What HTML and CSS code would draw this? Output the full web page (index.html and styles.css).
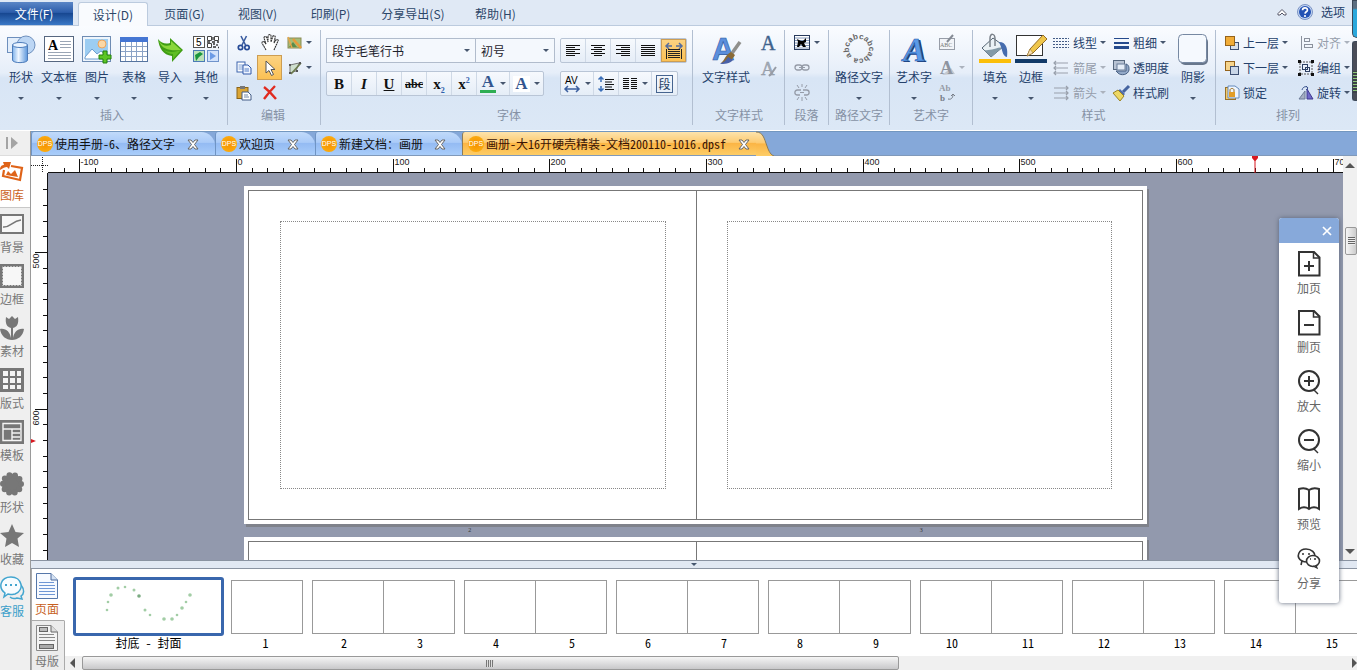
FILE: index.html
```html
<!DOCTYPE html>
<html lang="zh-CN">
<head>
<meta charset="utf-8">
<title>画册编辑器</title>
<link rel="stylesheet" href="styles.css">
</head>
<body>
<div class="app">
  <nav class="menubar">
    <button class="menu file">文件(F)</button>
    <button class="menu current">设计(D)</button>
    <button class="menu">页面(G)</button>
    <button class="menu">视图(V)</button>
    <button class="menu">印刷(P)</button>
    <button class="menu wide">分享导出(S)</button>
    <button class="menu">帮助(H)</button>
    <div class="menu-right">
      <button class="plain" aria-label="收起"><svg width="12" height="10" viewBox="0 0 12 10"><path d="M2 6.500L6 2.500L10 6.500V8H8L6 6L4 8H2Z" fill="#fff" stroke="#556" stroke-width="1"/></svg></button>
      <button class="plain" aria-label="问号"><svg width="16" height="16" viewBox="0 0 16 16"><circle cx="8" cy="8" r="7.500" fill="#c3d5f2" stroke="#7b94c4"/><circle cx="8" cy="8" r="6" fill="#2352b4"/><path d="M5.500 6.200C5.600 3 10.600 3.200 10.400 6.200C10.300 7.800 8.200 7.800 8 9.600" fill="none" stroke="#fff" stroke-width="1.700"/><circle cx="8" cy="12" r="1.100" fill="#fff"/></svg></button>
      <button class="plain">选项</button>
    </div>
  </nav>

  <header class="ribbon">
    <section class="group g-insert">
      <div class="tools">
        <button class="big"><svg width="30" height="30" viewBox="0 0 30 30"><defs><linearGradient id="cy"><stop offset="0" stop-color="#7fb2ea"/><stop offset=".4" stop-color="#eef6ff"/><stop offset="1" stop-color="#5c97dc"/></linearGradient></defs><rect x="1.500" y="3.500" width="16" height="15" fill="#e3eefb" stroke="#6d8fbd"/><circle cx="20" cy="11" r="9" fill="#bcd6f4" stroke="#6d8fbd"/><path d="M6.500 11V26C6.500 29.500 21.500 29.500 21.500 26V11Z" fill="url(#cy)" stroke="#4d7cba"/><ellipse cx="14" cy="11" rx="7.500" ry="2.500" fill="#e9f3ff" stroke="#4d7cba"/></svg><span>形状</span><i class="arrow"></i></button>
        <button class="big"><svg width="30" height="30" viewBox="0 0 30 30"><rect x=".500" y="2.500" width="29" height="25" fill="#fff" stroke="#566780"/><text x="4" y="16" class="serif" font-size="14" font-weight="bold">A</text><path d="M16 7.500H27M16 10.500H27M16 13.500H27M4 18.500H27M4 21.500H27M4 24.500H27" stroke="#9aa5b5"/></svg><span>文本框</span><i class="arrow"></i></button>
        <button class="big"><svg width="30" height="30" viewBox="0 0 30 30"><rect x=".500" y="2.500" width="28" height="25" fill="#eef5fc" stroke="#6e8cb3"/><rect x="3" y="5" width="23" height="20" fill="#9ccdf2"/><circle cx="20" cy="10" r="4" fill="#fbd7a5" stroke="#eda45c"/><path d="M3 23L10 15L15 20L19 17L26 23V25H3Z" fill="#fff" stroke="#6d9ed0"/><path d="M21 17H25V21H29V25H25V29H21V25H17V21H21Z" fill="#5cc526" stroke="#23800d"/></svg><span>图片</span><i class="arrow"></i></button>
        <button class="big"><svg width="30" height="30" viewBox="0 0 30 30"><rect x="1.500" y="3.500" width="27" height="24" fill="#fff" stroke="#56749f"/><rect x="1" y="3" width="28" height="5" fill="#4576d3"/><path d="M2 12.500H28M2 17.500H28M2 22.500H28M6.500 8V27M12.500 8V27M17.500 8V27M23.500 8V27" stroke="#8ba3c6"/></svg><span>表格</span><i class="arrow"></i></button>
        <button class="big"><svg width="30" height="30" viewBox="0 0 30 30"><path d="M3 5C7 10 11 10 15 9V4L28 16L17 28V22C8 21 4 14 3 5Z" fill="#3f9d14"/><path d="M4 7C8 13 12 12 16 11V7L26 16C16 17 7 16 4 7Z" fill="#8ad73b"/><path d="M9 16C14 19 21 18 26 16L18 25V20C14 20 11 18 9 16Z" fill="#5fbe22"/></svg><span>导入</span><i class="arrow"></i></button>
        <button class="big"><svg width="30" height="30" viewBox="0 0 30 30"><rect x="2.500" y="2.500" width="11" height="11" fill="#fff" stroke="#555"/><text x="5" y="12" class="sans" font-size="10">5</text><path d="M16.500 2.500H20.500V6.500H16.500ZM23.500 2.500H27.500V6.500H23.500ZM16.500 9.500H20.500V13.500H16.500Z" fill="#fff" stroke="#444"/><path d="M22 3V6M16 8H19M21 8H24M26 8H28M22 10H24M26 10V12M22 13H25M27 13.500H28" stroke="#333" stroke-width="1.300"/><rect x="2.500" y="16.500" width="11" height="11" fill="#bde1b8" stroke="#4b7bb5"/><path d="M4 21L9 18L12 20L8 23L5 27Z" fill="#1a963d"/><rect x="16.500" y="16.500" width="11" height="11" fill="#d2e2fb" stroke="#7093cb"/><path d="M19 18L25 22L19 26Z" fill="#6c9be6"/></svg><span>其他</span><i class="arrow"></i></button>
      </div>
      <h2>插入</h2>
    </section>

    <section class="group g-edit">
      <div class="tools grid3">
        <button class="small" aria-label="剪切"><svg width="16" height="16" viewBox="0 0 16 16"><path d="M5 1L9.500 10M10.500 1L6 10" stroke="#3b5da0" stroke-width="1.600"/><circle cx="4.500" cy="12.500" r="2.200" fill="none" stroke="#274b96" stroke-width="1.700"/><circle cx="11" cy="12.500" r="2.200" fill="none" stroke="#274b96" stroke-width="1.700"/></svg></button>
        <button class="small" aria-label="抓手"><svg width="18" height="18" viewBox="0 0 18 18"><path d="M5 16L1 9C1 7 3 7 4 9L5 10L3 4C3 2 5 2 6 4L7 8L7 2C8 0 10 0 10 2V8L12 2C13 1 15 2 14 4L13 9L15 6C16 5 18 6 17 7L13 16" fill="#fff" stroke="#333" stroke-width="1.100" stroke-dasharray="2 .5"/></svg></button>
        <button class="small pair" aria-label="编辑图片"><svg width="16" height="16" viewBox="0 0 16 16"><rect x="1" y="3" width="13" height="10" fill="#a6bd77" stroke="#8b8b55"/><path d="M2 12L6 7L10 12" fill="#5b8c4b"/><path d="M6 4L14 13" stroke="#e89a3a" stroke-width="2.500"/><path d="M1 2L5 13" stroke="#e6a64c" stroke-width="1.500"/></svg><i class="arrow"></i></button>
        <button class="small" aria-label="复制"><svg width="16" height="16" viewBox="0 0 16 16"><rect x="1" y="2" width="8" height="10" fill="#fff" stroke="#3d64ad"/><path d="M2.500 5H7M2.500 7H7M2.500 9H7" stroke="#7fa0d6"/><path d="M7 5H12L15 8V14H7Z" fill="#eef4ff" stroke="#3158a8"/><path d="M8.500 9H13M8.500 11H13" stroke="#557fc6"/></svg></button>
        <button class="small on" aria-label="选择"><svg width="14" height="18" viewBox="0 0 14 18"><path d="M3 2V14L6 11.500L8.500 16.500L10.500 15.500L8 10.500H12Z" fill="#fff" stroke="#555"/></svg></button>
        <button class="small pair" aria-label="节点"><svg width="16" height="16" viewBox="0 0 16 16"><path d="M3 5L12 3L9 11L3 13Z" fill="#cfe0cf" stroke="#777"/><path d="M4 14L14 3" stroke="#6b7a4c" stroke-width="1.600"/><path d="M2 4H4V6H2ZM12 2H14V4H12ZM2 12H4V14H2ZM9 10H11V12H9Z" fill="#555"/></svg><i class="arrow"></i></button>
        <button class="small" aria-label="粘贴"><svg width="16" height="16" viewBox="0 0 16 16"><rect x="1" y="2.500" width="11" height="11" fill="#dba534" stroke="#8b6418"/><rect x="4" y="1" width="5" height="3" fill="#777"/><path d="M6 7H12L15 10V15H6Z" fill="#fff" stroke="#445d86"/><path d="M8 10H12M8 12H13" stroke="#7789a5"/></svg></button>
        <button class="small" aria-label="删除"><svg width="16" height="16" viewBox="0 0 16 16"><path d="M2 2C6 5 10 9 14 14M13 1C9 5 5 10 2 14" stroke="#e02b20" stroke-width="2.400" fill="none"/></svg></button>
      </div>
      <h2>编辑</h2>
    </section>

    <section class="group g-font">
      <div class="tools stack">
        <div class="line">
          <div class="combo name"><select aria-label="字体名称"><option>段宁毛笔行书</option></select></div>
          <div class="combo size"><select aria-label="字号"><option>初号</option></select></div>
          <div class="bar gap">
            <button aria-label="左对齐"><svg width="16" height="14" viewBox="0 0 16 14"><path d="M1 1.500H15M1 3.500H10M1 5.500H15M1 7.500H10M1 9.500H15M1 11.500H10" stroke="#111"/></svg></button>
            <button aria-label="居中"><svg width="16" height="14" viewBox="0 0 16 14"><path d="M1 1.500H15M4 3.500H12M1 5.500H15M4 7.500H12M1 9.500H15M4 11.500H12" stroke="#111"/></svg></button>
            <button aria-label="右对齐"><svg width="16" height="14" viewBox="0 0 16 14"><path d="M1 1.500H15M6 3.500H15M1 5.500H15M6 7.500H15M1 9.500H15M6 11.500H15" stroke="#111"/></svg></button>
            <button aria-label="两端对齐"><svg width="16" height="14" viewBox="0 0 16 14"><path d="M1 1.500H15M1 3.500H15M1 5.500H15M1 7.500H15M1 9.500H15M1 11.500H15" stroke="#111"/></svg></button>
            <button class="on" aria-label="分散对齐"><svg width="18" height="18" viewBox="0 0 18 18"><path d="M1 4H7M11 4H17M4 1L1 4L4 7M14 1L17 4L14 7" stroke="#566d9e" stroke-width="1.500" fill="none"/><path d="M1.500 7V17M16.500 7V17M3 7.500H15M3 9.500H15M3 11.500H15M3 13.500H15M3 15.500H15" stroke="#222"/></svg></button>
          </div>
        </div>
        <div class="line">
          <div class="bar">
            <button class="glyph"><b>B</b></button>
            <button class="glyph"><b><em>I</em></b></button>
            <button class="glyph"><b><u>U</u></b></button>
            <button class="glyph strike"><b><s>abc</s></b></button>
            <button class="glyph"><b>x<sub>2</sub></b></button>
            <button class="glyph"><b>x<sup>2</sup></b></button>
            <button class="glyph drop"><b class="ink">A</b><i class="arrow"></i></button>
            <button class="glyph drop"><b class="paper">A</b><i class="arrow"></i></button>
          </div>
          <div class="bar gap2">
            <button class="drop" aria-label="字距"><svg width="18" height="18" viewBox="0 0 18 18"><text x="2" y="9" class="sans" font-size="10">AV</text><path d="M2 14H16M5 11L2 14L5 17M13 11L16 14L13 17" stroke="#3b5f9f" stroke-width="1.500" fill="none"/></svg><i class="arrow"></i></button>
            <button aria-label="行距"><svg width="18" height="18" viewBox="0 0 18 18"><path d="M4 2V7M4 11V16M1.500 4.500L4 2L6.500 4.500M1.500 13.500L4 16L6.500 13.500" stroke="#3b6fb8" stroke-width="1.500" fill="none"/><path d="M8 4.500H17M8 9.500H17M8 14.500H17M8 7H15M8 12H15" stroke="#111"/></svg></button>
            <button class="drop" aria-label="分栏"><svg width="16" height="14" viewBox="0 0 16 14"><path d="M1 1.500H7M1 3.500H7M1 5.500H7M1 7.500H7M1 9.500H7M1 11.500H7M9 1.500H15M9 3.500H15M9 5.500H15M9 7.500H15M9 9.500H15M9 11.500H15" stroke="#111"/></svg><i class="arrow"></i></button>
            <button><span class="boxed">段</span></button>
          </div>
        </div>
      </div>
      <h2>字体</h2>
    </section>

    <section class="group g-textstyle">
      <div class="tools">
        <button class="big"><svg width="32" height="32" viewBox="0 0 32 32"><text x="2" y="27" class="sans" font-size="31" font-weight="bold" fill="#5b8fdc" stroke="#2c57a0" stroke-width=".6">A</text><path d="M30 9L20 23" stroke="#8f8f8c" stroke-width="3.500"/><path d="M21 19L25 22C22 28 17 30 11 30C15 27 15 22 21 19Z" fill="#8a6a35"/><path d="M10 31C14 31 20 31 23 27L18 24C15 29 13 29 10 31Z" fill="#4961a8"/></svg><span>文字样式</span></button>
        <div class="col">
          <button class="small" aria-label="字符"><svg width="18" height="18" viewBox="0 0 18 18"><text x="2" y="16" class="serif" font-size="20" fill="#3e628c" stroke="#3e628c" stroke-width=".4">A</text></svg></button>
          <button class="small" aria-label="字符刷"><svg width="18" height="18" viewBox="0 0 18 18"><text x="2" y="16" class="serif" font-size="19" fill="#a3abb6" stroke="#8e96a2" stroke-width=".4">A</text><path d="M17 8L12 15L10 17" stroke="#979ca6" stroke-width="2" fill="none"/></svg></button>
        </div>
      </div>
      <h2>文字样式</h2>
    </section>

    <section class="group g-para">
      <div class="tools col">
        <button class="small pair" aria-label="绕排"><svg width="18" height="18" viewBox="0 0 18 18"><rect x="1.500" y="1.500" width="15" height="14" fill="#fff" stroke="#273a5c"/><path d="M2 4H16M2 6.500H16M2 9H16M2 11.500H16M2 14H16" stroke="#8398ba"/><path d="M4 5L8 7L10 7L13 4L13 8L11 9L13 13H10L8 10L6 13H4L5 8Z" fill="#000"/></svg><i class="arrow"></i></button>
        <button class="small" aria-label="链接"><svg width="18" height="18" viewBox="0 0 18 18"><rect x="2" y="6" width="7" height="5" rx="2.500" fill="none" stroke="#969ca8" stroke-width="1.300"/><rect x="9" y="6" width="7" height="5" rx="2.500" fill="none" stroke="#969ca8" stroke-width="1.300"/><path d="M6 8.500H12" stroke="#969ca8"/></svg></button>
        <button class="small" aria-label="断开链接"><svg width="18" height="18" viewBox="0 0 18 18"><path d="M8 6H4.500C1 6 1 11 4.500 11H7M10 6H13.500C17 6 17 11 13.500 11H11" fill="none" stroke="#969ca8" stroke-width="1.300"/><path d="M9 0V3M4 1L6 4M14 1L12 4M9 13V17M4 16L6 13M14 16L12 13M7 8.500H11" stroke="#969ca8"/></svg></button>
      </div>
      <h2>段落</h2>
    </section>

    <section class="group g-path">
      <div class="tools">
        <button class="big"><svg width="32" height="32" viewBox="0 0 32 32"><path id="ring" d="M9 23A10 10 0 1 1 23 23A10 10 0 0 1 9 23" fill="none"/><text class="sans" font-size="8" font-weight="bold" fill="#666"><textPath href="#ring">abcabcabcabca</textPath></text></svg><span>路径文字</span><i class="arrow"></i></button>
      </div>
      <h2>路径文字</h2>
    </section>

    <section class="group g-art">
      <div class="tools">
        <button class="big"><svg width="30" height="30" viewBox="0 0 30 30"><text x="6" y="28" class="serif" font-size="34" font-style="italic" font-weight="bold" fill="#1e3f78" aria-hidden="true">A</text><text x="4" y="27" class="serif" font-size="34" font-style="italic" font-weight="bold" fill="#5b9ae6" stroke="#2860ae" stroke-width=".6">A</text></svg><span>艺术字</span><i class="arrow"></i></button>
        <div class="col">
          <button class="small" aria-label="编辑艺术字"><svg width="18" height="18" viewBox="0 0 18 18"><rect x="1.500" y="4.500" width="15" height="11" fill="#f2f4f8" stroke="#979da8"/><text x="2" y="13" class="serif" font-size="6" fill="#777">ABC</text><path d="M15 1L9 8" stroke="#858b95" stroke-width="2"/></svg></button>
          <button class="small pair dim" aria-label="艺术字形状"><svg width="18" height="18" viewBox="0 0 18 18"><path d="M4 16L13 9L17 15Z" fill="#c4c8cf"/><text x="2" y="15" class="serif" font-size="18" font-weight="bold" fill="#8e949f">A</text></svg><i class="arrow"></i></button>
          <button class="small" aria-label="竖排"><svg width="18" height="18" viewBox="0 0 18 18"><text x="1" y="7" class="serif" font-size="9" font-weight="bold" fill="#969ca6">Ab</text><text x="2" y="17" class="serif" font-size="9" font-weight="bold" fill="#777d88">b</text><path d="M10 15C14 16 15 13 15 10M13 12L15 10L17 12" fill="none" stroke="#777d88"/></svg></button>
        </div>
      </div>
      <h2>艺术字</h2>
    </section>

    <section class="group g-style">
      <div class="tools">
        <button class="big"><svg width="32" height="32" viewBox="0 0 32 32"><path d="M3 15L14 5L25 13L12 24Z" fill="#eaf1f5" stroke="#566675"/><path d="M5 17C11 18 16 15 24 14L12 24Z" fill="#8299a7"/><path d="M11 14V5C11 0 16 0 16 6V13" fill="none" stroke="#7b828a" stroke-width="1.500"/><path d="M20 9C28 9 29 17 28 24C23 23 24 17 20 9Z" fill="#456cae"/><rect y="26" width="32" height="4" fill="#fbbf0a"/></svg><span>填充</span><i class="arrow"></i></button>
        <button class="big"><svg width="32" height="32" viewBox="0 0 32 32"><rect x="1.500" y="2.500" width="26" height="20" fill="#fff" stroke="#333"/><path d="M28 2L32 6L18 20L12 23L15 16Z" fill="#efc64b" stroke="#936c28"/><path d="M12 23L15 16L18 20Z" fill="#f7dfb2" stroke="#936c28" stroke-width=".5"/><rect y="26" width="32" height="4" fill="#123a68"/></svg><span>边框</span><i class="arrow"></i></button>
        <div class="col">
          <button class="row"><svg width="18" height="18" viewBox="0 0 18 18"><path d="M1 4.500H17M1 7.500H17M1 10.500H17M1 13.500H17" stroke="#445c86" stroke-dasharray="2 1"/></svg>线型<i class="arrow"></i></button>
          <button class="row dim"><svg width="18" height="18" viewBox="0 0 18 18"><path d="M2 4H16M2 9H16M2 14H16M4 2L2 4L4 6M4 7L2 9L4 11M4 12L2 14L4 16" stroke="#99a0ac" stroke-width="1.200" fill="none"/></svg>箭尾<i class="arrow"></i></button>
          <button class="row dim"><svg width="18" height="18" viewBox="0 0 18 18"><path d="M2 4H16M2 9H16M2 14H16M14 2L16 4L14 6M14 7L16 9L14 11M14 12L16 14L14 16" stroke="#99a0ac" stroke-width="1.200" fill="none"/></svg>箭头<i class="arrow"></i></button>
        </div>
        <div class="col">
          <button class="row"><svg width="18" height="18" viewBox="0 0 18 18"><path d="M2 4.500H17" stroke="#254a8d"/><path d="M2 9H17" stroke="#254a8d" stroke-width="2"/><path d="M2 13.500H17" stroke="#254a8d" stroke-width="3"/></svg>粗细<i class="arrow"></i></button>
          <button class="row"><svg width="18" height="18" viewBox="0 0 18 18"><rect x="1.500" y="1.500" width="11" height="9" fill="#b8c3d3" stroke="#56677d"/><path d="M4 12H14V5C17 6 17 8 17 11C16 16 9 17 6 14Z" fill="#93a9c8" stroke="#486083"/><rect x="5" y="5" width="8" height="6" fill="#e5edf7" stroke="#6b7e9a"/></svg>透明度</button>
          <button class="row"><svg width="18" height="18" viewBox="0 0 18 18"><path d="M17 2L11 8" stroke="#4564a0" stroke-width="3"/><path d="M8 5L13 10L11 12L6 7Z" fill="#506cab"/><path d="M6 6L12 12L8 17L1 9Z" fill="#edd764" stroke="#9c8424"/></svg>样式刷</button>
        </div>
        <button class="big"><svg width="32" height="32" viewBox="0 0 32 32"><rect x="3" y="4" width="28" height="28" rx="5" fill="#68778c"/><rect x="1.500" y="1.500" width="28" height="28" rx="4" fill="#f5f9fe" stroke="#7688a2"/></svg><span>阴影</span><i class="arrow"></i></button>
      </div>
      <h2>样式</h2>
    </section>

    <section class="group g-arrange">
      <div class="tools">
        <div class="col">
          <button class="row"><svg width="16" height="16" viewBox="0 0 16 16"><rect x="6.500" y="7.500" width="8" height="7" fill="#d7dfeb" stroke="#3d4f72"/><rect x="1.500" y="1.500" width="9" height="9" fill="#f1ac37" stroke="#95631a"/></svg>上一层<i class="arrow"></i></button>
          <button class="row"><svg width="16" height="16" viewBox="0 0 16 16"><rect x="1.500" y="1.500" width="9" height="9" fill="#f6d48c" stroke="#95631a"/><rect x="6.500" y="6.500" width="8" height="8" fill="#cad7e8" stroke="#3d4f72"/></svg>下一层<i class="arrow"></i></button>
          <button class="row"><svg width="16" height="16" viewBox="0 0 16 16"><rect x="1.500" y="2.500" width="10" height="12" fill="#f3c969" stroke="#96702a"/><path d="M4 1H11L15 4V13H4Z" fill="#edf5ff" stroke="#658abb"/><rect x="5" y="7" width="6" height="5" fill="#e29d26"/><path d="M6 7V5C6 3 10 3 10 5V7" fill="none" stroke="#9a6b18"/></svg>锁定</button>
        </div>
        <div class="col">
          <button class="row dim"><svg width="16" height="16" viewBox="0 0 16 16"><path d="M3.500 1V15" stroke="#8b919d"/><rect x="6.500" y="3.500" width="5" height="3" fill="none" stroke="#8b919d"/><rect x="6.500" y="9.500" width="8" height="3" fill="none" stroke="#8b919d"/></svg>对齐<i class="arrow"></i></button>
          <button class="row"><svg width="16" height="16" viewBox="0 0 16 16"><path d="M2 2H14V14H2Z" fill="none" stroke="#555" stroke-dasharray="2 1"/><rect x="4.500" y="4.500" width="5" height="5" fill="none" stroke="#2d4063"/><rect x="7.500" y="7.500" width="4" height="4" fill="none" stroke="#2d4063"/><path d="M0 0H3V3H0ZM13 0H16V3H13ZM0 13H3V16H0ZM13 13H16V16H13Z" fill="#111"/></svg>编组<i class="arrow"></i></button>
          <button class="row"><svg width="16" height="16" viewBox="0 0 16 16"><path d="M7 6V14H1Z" fill="#a5afc3" stroke="#6c7b98"/><path d="M9 4V14H15Z" fill="#6f69c9" stroke="#3f3b90"/><path d="M4 5C5 1 9 1 10 3M8 1L10 3L8 5" stroke="#3c5590" fill="none"/></svg>旋转<i class="arrow"></i></button>
        </div>
      </div>
      <h2>排列</h2>
    </section>
  </header>

  <div class="body">
    <aside class="sidebar">
      <button class="toggle" aria-label="展开"><svg width="14" height="14" viewBox="0 0 14 14"><path d="M2 1V13" stroke="#a4a4a4" stroke-width="2"/><path d="M6 1L13 7L6 13Z" fill="#a4a4a4"/></svg></button>
      <button class="side active"><svg width="24" height="24" viewBox="0 0 24 24"><path d="M11 6L22 8L20 20L3 16L4 10" fill="none" stroke="#df6318" stroke-width="2.200"/><path d="M6 15L8 11L11 14L15 10L18 17Z" fill="#df6318"/><path d="M0 10C0 6 2 5 4 5L3 2L11 2L9 9L7 7C5 7 3 8 0 10Z" fill="#df6318"/></svg>图库</button>
      <button class="side"><svg width="24" height="24" viewBox="0 0 24 24"><rect x="1" y="3" width="22" height="18" fill="#f7f7f7" stroke="#777" stroke-width="2"/><path d="M3 15C10 16 12 9 21 8" fill="none" stroke="#777" stroke-width="1.500"/></svg>背景</button>
      <button class="side"><svg width="24" height="24" viewBox="0 0 24 24"><rect x="1" y="1" width="22" height="22" fill="#f7f7f7" stroke="#777" stroke-width="2"/><rect x="2.500" y="2.500" width="19" height="19" fill="none" stroke="#777" stroke-dasharray="2 1"/></svg>边框</button>
      <button class="side"><svg width="24" height="24" viewBox="0 0 24 24"><path d="M6 1L9 3L12 0L15 3L18 1C19 8 17 11 13 12V22C14 16 18 12 24 13C23 20 18 24 12 24C6 24 1 20 0 13C6 12 10 16 11 22V12C7 11 5 8 6 1Z" fill="#777"/></svg>素材</button>
      <button class="side"><svg width="24" height="24" viewBox="0 0 24 24"><rect width="24" height="24" fill="#777"/><path d="M3 3H8V8H3ZM10 3H15V8H10ZM17 3H21V8H17ZM3 10H8V15H3ZM10 10H15V15H10ZM17 10H21V15H17ZM3 17H8V21H3ZM10 17H15V21H10ZM17 17H21V21H17Z" fill="#f5f5f5"/></svg>版式</button>
      <button class="side"><svg width="24" height="24" viewBox="0 0 24 24"><rect width="24" height="24" fill="#777"/><path d="M3 3.500H21V20.500H3ZM3 9H21M12 9V20M12 13H20M12 17H20" fill="none" stroke="#f5f5f5" stroke-width="1.400"/></svg>模板</button>
      <button class="side"><svg width="24" height="24" viewBox="0 0 24 24"><circle cx="12" cy="12" r="10" fill="#777"/><circle cx="12" cy="12" r="9" fill="none" stroke="#777" stroke-width="6" stroke-dasharray="0 5.65" stroke-linecap="round"/></svg>形状</button>
      <button class="side"><svg width="24" height="24" viewBox="0 0 24 24"><path d="M12 0L15.500 8L24 9L17.500 14.500L19 23L12 19L5 23L6.500 14.500L0 9L8.500 8Z" fill="#777"/></svg>收藏</button>
      <button class="side service"><svg width="24" height="24" viewBox="0 0 24 24"><path d="M21 9C25 14 24 18 21 20L22 23L17 22C14 23 11 22 10 21" fill="none" stroke="#42a5cf" stroke-width="1.500"/><path d="M4 21L5 17C-2 12 0 1 11 1C22 1 25 14 15 18C12 19 9 18 8 18Z" fill="#f7fcff" stroke="#42a5cf" stroke-width="1.500"/><path d="M5 9H7M10 9H12M15 9H17" stroke="#42a5cf" stroke-width="2"/></svg>客服</button>
    </aside>

    <main class="work">
      <div class="tabs">
        <div class="tab t1"><span class="logo">DPS</span><span>使用手册-6、路径文字</span><button class="close" aria-label="关闭"><svg width="12" height="11" viewBox="0 0 12 11"><path d="M1 1H4L6 3.500L8 1H11L7.500 5.500L11 10H8L6 7.500L4 10H1L4.500 5.500Z" fill="#fff" stroke="#666"/></svg></button></div>
        <div class="tab t2"><span class="logo">DPS</span><span>欢迎页</span><button class="close" aria-label="关闭"><svg width="12" height="11" viewBox="0 0 12 11"><path d="M1 1H4L6 3.500L8 1H11L7.500 5.500L11 10H8L6 7.500L4 10H1L4.500 5.500Z" fill="#fff" stroke="#666"/></svg></button></div>
        <div class="tab t3"><span class="logo">DPS</span><span>新建文档：画册</span><button class="close" aria-label="关闭"><svg width="12" height="11" viewBox="0 0 12 11"><path d="M1 1H4L6 3.500L8 1H11L7.500 5.500L11 10H8L6 7.500L4 10H1L4.500 5.500Z" fill="#fff" stroke="#666"/></svg></button></div>
        <div class="tab active"><span class="logo">DPS</span><span>画册-大16开硬壳精装-文档200110-1016.dpsf</span><button class="close" aria-label="关闭"><svg width="12" height="11" viewBox="0 0 12 11"><path d="M1 1H4L6 3.500L8 1H11L7.500 5.500L11 10H8L6 7.500L4 10H1L4.500 5.500Z" fill="#fff" stroke="#666"/></svg></button></div>
        <svg class="cap" width="20" height="24" viewBox="0 0 20 24"><defs><linearGradient id="or" x2="0" y2="1"><stop offset="0" stop-color="#fde3ac"/><stop offset=".45" stop-color="#fdcb72"/><stop offset=".5" stop-color="#fbb545"/><stop offset="1" stop-color="#fdcd67"/></linearGradient></defs><path d="M0 0C7 0 8 6 11 14C13 20 15 23 18 24H0Z" fill="url(#or)"/><path d="M0 0C7 0 8 6 11 14C13 20 15 23 18 24" fill="none" stroke="#8c7c58"/></svg>
      </div>

      <div class="editor">
        <div class="ruler-x"><svg id="rulerX" width="100%" height="17"></svg></div>
        <div class="ruler-y"><svg id="rulerY" width="18" height="100%"></svg></div>
        <div class="canvas">
          <div class="spread">
            <div class="sheet"><div class="leaf"><div class="margin"></div></div><div class="leaf"><div class="margin"></div></div></div>
          </div>
          <div class="folios"><span>2</span><span>3</span></div>
          <div class="spread">
            <div class="sheet"><div class="leaf"></div><div class="leaf"></div></div>
          </div>
        </div>
        <div class="vscroll"><i class="up"></i><div class="grip"></div><i class="down"></i></div>
      </div>

      <div class="splitter"><i class="arrow"></i></div>

      <div class="pages">
        <div class="kinds">
          <button class="kind active"><svg width="24" height="28" viewBox="0 0 24 28"><path d="M1.500 1.500H16L22.500 8V26.500H1.500Z" fill="#f7faff" stroke="#5577aa"/><path d="M16 1.500V8H22.500" fill="#d5e2f3" stroke="#4b689b"/><path d="M4 10.500H19M4 13.500H20M4 16.500H20M4 19.500H20M4 22.500H20" stroke="#6f97d5"/></svg>页面</button>
          <button class="kind"><svg width="24" height="28" viewBox="0 0 24 28"><path d="M1.500 1.500H16L22.500 8V26.500H1.500Z" fill="#f4f4f4" stroke="#888"/><path d="M16 1.500V8H22.500" fill="#ddd" stroke="#666"/><rect x="4.500" y="3.500" width="8" height="4" fill="#bbb" stroke="#666"/><rect x="4.500" y="20.500" width="14" height="4" fill="#aaa" stroke="#666"/><path d="M4 10.500H19M4 13.500H20M4 16.500H20" stroke="#888"/></svg>母版</button>
        </div>
        <div class="strip">
          <div class="thumbs">
            <figure class="cover"><div class="cover-box"><svg width="144" height="50" viewBox="0 0 144 50"><g fill="#a2cda5"><circle cx="31" cy="30" r="1.300"/><circle cx="32" cy="22" r="1.300"/><circle cx="35" cy="15" r="1.800"/><circle cx="42" cy="8" r="1.500"/><circle cx="49" cy="7" r="1.300"/><circle cx="58" cy="10" r="1.500"/><circle cx="63" cy="16" r="1.800" fill="#7bab82"/><circle cx="69" cy="30" r="1.500"/><circle cx="74" cy="35" r="1.300"/><circle cx="88" cy="39" r="1.800"/><circle cx="96" cy="39" r="1.800"/><circle cx="101" cy="35" r="1.300"/><circle cx="106" cy="28" r="1.800"/><circle cx="110" cy="22" r="1.300"/><circle cx="114" cy="15" r="1.800"/></g></svg></div><figcaption>封底 - 封面</figcaption></figure>
            <figure class="single"><div class="box"><i></i></div><figcaption><span>1</span></figcaption></figure>
            <figure class="double"><div class="box"><i></i><i></i></div><figcaption><span>2</span><span>3</span></figcaption></figure>
            <figure class="double"><div class="box"><i></i><i></i></div><figcaption><span>4</span><span>5</span></figcaption></figure>
            <figure class="double"><div class="box"><i></i><i></i></div><figcaption><span>6</span><span>7</span></figcaption></figure>
            <figure class="double"><div class="box"><i></i><i></i></div><figcaption><span>8</span><span>9</span></figcaption></figure>
            <figure class="double"><div class="box"><i></i><i></i></div><figcaption><span>10</span><span>11</span></figcaption></figure>
            <figure class="double"><div class="box"><i></i><i></i></div><figcaption><span>12</span><span>13</span></figcaption></figure>
            <figure class="double"><div class="box"><i></i><i></i></div><figcaption><span>14</span><span>15</span></figcaption></figure>
          </div>
          <div class="hscroll"><i class="left"></i><div class="track"><div class="hgrip"></div></div><i class="right"></i></div>
        </div>
      </div>
    </main>
  </div>

  <aside class="float">
    <header><button aria-label="关闭面板"><svg width="10" height="10" viewBox="0 0 10 10"><path d="M1 1L9 9M9 1L1 9" stroke="#fff" stroke-width="1.700"/></svg></button></header>
    <button class="act"><svg width="26" height="28" viewBox="0 0 26 28"><path d="M3 2H18L23.500 7.500V25.500H3Z" fill="none" stroke="#333" stroke-width="2"/><path d="M17.500 2V8H23.500" fill="none" stroke="#333" stroke-width="1.500"/><path d="M8 16H18M13 11V21" stroke="#333" stroke-width="2"/></svg>加页</button>
    <button class="act"><svg width="26" height="28" viewBox="0 0 26 28"><path d="M3 2H18L23.500 7.500V25.500H3Z" fill="none" stroke="#333" stroke-width="2"/><path d="M17.500 2V8H23.500" fill="none" stroke="#333" stroke-width="1.500"/><path d="M8 16H18" stroke="#333" stroke-width="2"/></svg>删页</button>
    <button class="act"><svg width="26" height="28" viewBox="0 0 26 28"><circle cx="13" cy="13" r="10" fill="none" stroke="#333" stroke-width="2"/><path d="M8 13H18M13 8V18" stroke="#333" stroke-width="2"/><path d="M18 22L22 26" stroke="#333" stroke-width="1.500"/></svg>放大</button>
    <button class="act"><svg width="26" height="28" viewBox="0 0 26 28"><circle cx="13" cy="13" r="10" fill="none" stroke="#333" stroke-width="2"/><path d="M8 13H18" stroke="#333" stroke-width="2"/><path d="M18 22L22 26" stroke="#333" stroke-width="1.500"/></svg>缩小</button>
    <button class="act"><svg width="26" height="28" viewBox="0 0 26 28"><path d="M13 4C10 2 6 2 3 3V23C6 21 10 21 13 23C16 21 20 21 23 23V3C20 2 16 2 13 4V23" fill="none" stroke="#333" stroke-width="2"/></svg>预览</button>
    <button class="act"><svg width="26" height="28" viewBox="0 0 26 28"><path d="M5 20L6 16C-1 12 3 4 10 4C16 4 19 8 19 11" fill="none" stroke="#333" stroke-width="1.600"/><path d="M6 16C8 17 9 17 11 17" fill="none" stroke="#333" stroke-width="1.600"/><ellipse cx="17" cy="16" rx="6.500" ry="5.500" fill="#fff" stroke="#333" stroke-width="1.600"/><path d="M20 20L21 23L17 21" fill="none" stroke="#333" stroke-width="1.300"/><path d="M6 9H8M12 9H14M14 14H15M18 14H20" stroke="#333" stroke-width="1.700"/></svg>分享</button>
  </aside>
  <div class="gauge"><i class="tube"></i><i class="meter"></i></div>
</div>
<script src="script.js"></script>
</body>
</html>
```

FILE: styles.css
```css
* { box-sizing: border-box; }
body, h2, figure { margin: 0; }
body {
  font: 12px/18px "Noto Sans CJK SC", "Noto Sans", sans-serif;
  color: #25416b;
  background: #fff;
}
button {
  font: inherit;
  color: inherit;
  background: none;
  border: 0;
  margin: 0;
  padding: 0;
  white-space: nowrap;
}
svg { display: block; flex: none; overflow: visible; }
.serif { font-family: "Liberation Serif", serif; }
.sans { font-family: "Liberation Sans", sans-serif; }
.app {
  position: relative;
  display: flex;
  flex-direction: column;
  height: 100vh;
  overflow: hidden;
}
.arrow {
  flex: none;
  width: 0;
  height: 0;
  border: 3px solid transparent;
  border-top-color: #46566e;
  border-bottom: 0;
}
.dim { color: #959dab; }
.dim .arrow { border-top-color: #abb2bd; }

/* menu bar */
.menubar {
  display: flex;
  flex: none;
  height: 26px;
  padding-top: 2px;
  background: #e0e9f5;
  border-bottom: 1px solid #bccbde;
}
.menu {
  width: 73px;
  height: 23px;
  color: #2c4668;
}
.menu.file {
  margin-right: 5px;
  width: 73px;
  padding-right: 5px;
  color: #fff;
  background: linear-gradient(#5b86c6, #2c5dab 45%, #184892 50%, #3a78c6);
}
.menu.current {
  width: 70px;
  height: 24px;
  background: #f9fbfe;
  border: 1px solid #bccbde;
  border-bottom: 0;
  border-radius: 3px 3px 0 0;
}
.menu.wide { width: 92px; }
.menu-right {
  display: flex;
  align-items: center;
  gap: 9px;
  margin-left: auto;
  padding: 0 12px 4px 0;
}
.menu-right .plain:last-child { margin-left: -1px; }

/* ribbon */
.ribbon {
  display: flex;
  flex: none;
  height: 105px;
  padding: 4px 0 5px;
  background: linear-gradient(#fafcff, #e6eef9 45%, #d8e5f5 50%, #dce8f6);
  border-bottom: 1px solid #fff;
}
.group {
  display: flex;
  flex: none;
  flex-direction: column;
  justify-content: space-between;
  border-right: 1px solid #b2bfd1;
}
.group h2 {
  font-size: 12px;
  line-height: 20px;
  font-weight: 400;
  text-align: center;
  color: #8692a5;
}
.tools { display: flex; height: 76px; }
.g-insert { width: 228px; padding-left: 2px; }
.g-edit { width: 93px; padding-left: 3px; }
.g-font { width: 372px; padding-left: 5px; }
.g-textstyle { width: 92px; padding-left: 6px; }
.g-para { width: 44px; }
.g-path { width: 61px; }
.g-art { width: 83px; }
.g-style { width: 243px; padding-left: 4px; }
.g-arrange { flex: 1; border-right: 0; padding-left: 8px; }
.g-edit h2, .g-textstyle h2, .g-style h2, .g-arrange h2 { padding-right: 5px; }
.g-insert h2 { padding-right: 5px; }
.big {
  display: flex;
  flex-direction: column;
  align-items: center;
  flex: none;
  width: 36px;
  padding-top: 3px;
}
.big svg { height: 32px; }
.big span { line-height: 18px; margin-top: 3px; }
.big .arrow { margin-top: 11px; }
.g-insert .big:nth-child(-n+3) { width: 38px; }
.g-textstyle .big { width: 54px; }
.g-path .big { width: 60px; }
.g-art .big { width: 48px; }
.g-style .big:last-child { margin-left: auto; width: 44px; }
.col { display: flex; flex-direction: column; }
.small {
  display: flex;
  align-items: center;
  justify-content: center;
  width: 25px;
  height: 25px;
}
.small.pair { width: 34px; gap: 3px; }
.g-edit .grid3 { display: grid; grid-template: repeat(3, 25px) / 26px 25px 34px; }
.g-textstyle .col { margin-left: 2px; }
.g-para .col { padding-left: 4px; }
.g-art .small { width: 18px; }
.g-art .small.pair { width: 27px; }
.on {
  background: linear-gradient(#fbd384, #fbc052);
  outline: 1px solid #cc9d53;
  outline-offset: -1px;
}
.stack { flex-direction: column; gap: 8px; padding-top: 8px; }
.line { display: flex; height: 25px; }
.combo {
  position: relative;
  border: 1px solid #b1bccc;
  background: #f4f8fd;
}
.combo.name { width: 150px; }
.combo.size { width: 79px; border-left: 0; }
.combo select {
  appearance: none;
  width: 100%;
  height: 100%;
  padding: 0 5px;
  border: 0;
  background: none;
  font: inherit;
  color: #1c222c;
}
.combo::after {
  content: "";
  position: absolute;
  top: 10px;
  right: 5px;
  border: 3px solid transparent;
  border-top-color: #46566e;
  border-bottom: 0;
}
.bar {
  display: flex;
  border: 1px solid #b9c5d6;
  border-radius: 2px;
  background: linear-gradient(#f6f9fd, #e5edf7);
}
.bar.gap { margin-left: 5px; }
.bar.gap2 { margin-left: 16px; }
.bar button {
  display: flex;
  align-items: center;
  justify-content: center;
  width: 25px;
  border-right: 1px solid #cfd9e6;
}
.bar button:last-child { border-right: 0; }
.bar .drop { width: 33px; gap: 4px; }
.glyph { font: 15px/20px "Liberation Serif", serif; color: #111; }
.glyph sub, .glyph sup { font-size: 8px; line-height: 0; color: #2f61ad; }
.bar .strike { font-size: 12px; }
.ink, .paper { font-size: 17px; line-height: 16px; color: #34568f; padding: 0 2px; }
.ink { border-bottom: 3px solid #2fae53; }
.paper { background: #fff; }
.boxed { border: 1px solid #46648f; line-height: 16px; color: #233c62; padding: 0 1px; }
.row { display: flex; align-items: center; gap: 3px; height: 25px; }
.g-style .col { margin-left: 3px; }
.g-style .col + .col { margin-left: 6px; }
.g-arrange .col + .col { margin-left: 10px; }

/* side bar */
.body { display: flex; flex: 1; min-height: 0; }
.sidebar {
  display: flex;
  flex: none;
  flex-direction: column;
  width: 31px;
  overflow: hidden;
  background: #efefef;
  border-right: 1px solid #9a9a9a;
  color: #777;
}
.toggle { height: 25px; padding-left: 5px; flex: none; border-bottom: 1px solid #ddd; }
.side {
  display: flex;
  flex: none;
  flex-direction: column;
  align-items: flex-start;
  gap: 2px;
  height: 52px;
  padding-top: 4px;
}
.side.active { color: #cc6222; background: #fff; border-bottom: 1px solid #c8c8c8; }
.side.service { color: #3c9fca; }

/* document tabs */
.work { display: flex; flex: 1; flex-direction: column; min-width: 0; }
.tabs {
  display: flex;
  flex: none;
  height: 25px;
  background: #85a8d9;
  border-top: 1px solid #7397bf;
  border-bottom: 1px solid #8099ba;
}
.tab {
  display: flex;
  align-items: center;
  flex: none;
  padding: 1px 16px 0 5px;
  gap: 2px;
  font-family: "Noto Sans Mono CJK SC", "Noto Sans CJK SC", sans-serif;
  color: #111;
  white-space: nowrap;
  background: linear-gradient(#c1dafa, #aacbf8 45%, #94bbf3 50%, #a9cdfa);
  border: 1px solid #6f94c4;
  border-width: 0 0 0 1px;
  border-radius: 3px 14px 0 0;
}
.t1 { width: 184px; }
.t2 { width: 100px; }
.t3 { width: 147px; }
.tab.active {
  width: 294px;
  padding-right: 6px;
  color: #3a1405;
  background: linear-gradient(#fde3ac, #fdcb72 45%, #fbb545 50%, #fdcd67);
  border-color: #8c7c58;
  border-radius: 3px 0 0 0;
}
.close { margin-left: auto; }
.logo {
  width: 16px;
  height: 16px;
  border-radius: 50%;
  font: 7px/16px "Liberation Sans", sans-serif;
  text-align: center;
  color: #fff;
  background: radial-gradient(#f59000, #fdb515);
}

/* editor */
.editor {
  display: grid;
  flex: 1;
  min-height: 0;
  grid-template: 17px minmax(0, 1fr) / 17px minmax(0, 1fr) 14px;
}
.ruler-x {
  grid-column: 1 / 3;
  background: #fff;
  overflow: hidden;
}
.ruler-y { background: #fff; overflow: hidden; }
.tick-label { font: 9px "Liberation Sans", sans-serif; fill: #222; }
.canvas {
  display: flex;
  flex-direction: column;
  align-items: center;
  overflow: hidden;
  padding-top: 13px;
  background: #9299ad;
}
.spread {
  flex: none;
  width: 69%;
  min-width: 903px;
  padding: 4px;
  background: #fff;
  box-shadow: 2px 3px 0 #7f828b;
}
.sheet { display: flex; border: 1px solid #777; }
.leaf { flex: 1; height: 328px; padding: 30px 30px 30px 31px; }
.leaf + .leaf { border-left: 1px solid #777; padding-left: 30px; }
.margin { height: 100%; border: 1px dotted #888; }
.folios {
  display: flex;
  flex: none;
  width: 69%;
  min-width: 903px;
  height: 13px;
  font: 6px/12px "Liberation Serif", serif;
  color: #333;
}
.folios span { flex: 1; text-align: center; }
.vscroll {
  display: flex;
  grid-column: 3;
  grid-row: 1 / 3;
  flex-direction: column;
  align-items: center;
  background: #f0f0f0;
  padding: 7px 0 6px;
}
.up, .down, .left, .right { flex: none; border: 5px solid transparent; }
.up { border-top: 0; border-bottom-color: #555; }
.down { border-bottom: 0; border-top-color: #555; margin-top: auto; }
.grip {
  width: 12px;
  height: 28px;
  margin: 59px 0 0 2px;
  border: 1px solid #999;
  border-radius: 2px;
  background: repeating-linear-gradient(#666 0 1px, #eee 1px 2px) center / 7px 8px no-repeat, linear-gradient(90deg, #f6f6f6, #ccc);
}
.splitter {
  display: flex;
  flex: none;
  align-items: center;
  justify-content: center;
  height: 9px;
  background: #e1e8f2;
  border: 1px solid #8a93a1;
  border-width: 1px 0;
}

/* page strip */
.pages { display: flex; flex: none; height: 101px; background: #fff; }
.kinds {
  display: flex;
  flex: none;
  flex-direction: column;
  width: 34px;
  background: #ececec;
}
.kind {
  display: flex;
  flex: none;
  flex-direction: column;
  align-items: center;
  height: 52px;
  padding: 3px 2px 0 0;
  color: #777;
  border: 1px solid #aaa;
  border-width: 0 1px 1px 1px;
}
.kind.active { background: #fff; color: #c75f1e; border-right-color: #fff; }
.strip { display: flex; flex: 1; min-width: 0; flex-direction: column; }
.thumbs {
  display: flex;
  flex: 1;
  overflow: hidden;
  padding: 8px 0 0 8px;
  color: #000;
}
figure { flex: none; font-family: "Noto Sans Mono CJK SC", "Noto Sans CJK SC", sans-serif; }
.cover { width: 151px; text-align: center; }
.cover-box { height: 59px; border: 3px solid #3967ad; border-radius: 3px; }
.cover figcaption { line-height: 14px; }
.box {
  display: flex;
  height: 54px;
  margin: 3px 5px 0 4px;
  border: 1px solid #999;
}
.box i { flex: 1; }
.box i + i { border-left: 1px solid #999; }
.single { width: 81px; margin-left: 3px; }
.double { width: 152px; }
.single .box { margin-right: 5px; }
.box + figcaption { display: flex; padding-top: 2px; line-height: 14px; }
figcaption span { flex: 1; padding-right: 4px; text-align: center; }
.hscroll {
  display: flex;
  align-items: center;
  flex: none;
  height: 14px;
  background: #f0f0f0;
}
.left { border-left: 0; border-right-color: #555; margin: 0 7px 0 5px; }
.right { border-right: 0; border-left-color: #555; }
.track { flex: 1; height: 14px; }
.hgrip {
  width: 64.3%;
  height: 14px;
  border: 1px solid #999;
  border-radius: 2px;
  background: repeating-linear-gradient(90deg, #777 0 1px, #ddd 1px 2px) center / 8px 7px no-repeat, linear-gradient(#f5f5f5, #c8c8ca);
}

/* floating tool panel */
.float {
  position: absolute;
  top: 218px;
  right: 18px;
  display: flex;
  flex-direction: column;
  width: 60px;
  padding-bottom: 6px;
  color: #666;
  background: #fff;
  border-radius: 3px;
  box-shadow: 0 0 5px #5a6478;
}
.float header {
  display: flex;
  align-items: center;
  justify-content: flex-end;
  height: 25px;
  padding-right: 7px;
  background: #87a9da;
  border-radius: 3px 3px 0 0;
}
.act {
  display: flex;
  flex-direction: column;
  align-items: center;
  gap: 1px;
  height: 59px;
  padding-top: 7px;
}
.gauge { position: absolute; top: 0; right: 0; width: 5px; }
.tube, .meter { display: block; border: 1px solid #3c4858; border-right: 0; }
.tube { height: 38px; background: linear-gradient(#5c6e80 20%, #2ba8dc 25%); border-radius: 0 0 0 6px; }
.meter {
  height: 60px;
  margin-top: 3px;
  border-radius: 3px 0 0 3px;
  background: linear-gradient(#4a4d58 50%, transparent 50% 88%, #4a4d58 88%), repeating-linear-gradient(#8fc97a 0 1px, #3c4048 1px 3px);
}
```

FILE: script.js
```js
const NS = "http://www.w3.org/2000/svg";
const STEP = 156.7;

function add(parent, name, attrs, text) {
  const node = document.createElementNS(NS, name);
  for (const key in attrs) node.setAttribute(key, attrs[key]);
  if (text !== undefined) node.textContent = text;
  parent.appendChild(node);
  return node;
}

function drawHorizontal(svg) {
  const zero = 205;
  let path = "M17 16.5H4000";
  for (let i = -11; i < 200; i++) {
    const x = Math.round(zero + i * STEP / 10) + 0.5;
    if (x < 17) continue;
    path += "M" + x + " " + (i % 10 === 0 ? 3 : 12) + "V17";
    if (i % 10 === 0) add(svg, "text", { x: x + 1, y: 9, class: "tick-label" }, i * 10);
  }
  add(svg, "path", { d: path, stroke: "#111", fill: "none" });
  add(svg, "path", { d: "M11.500 1V17M0 9.500H17", stroke: "#222", "stroke-dasharray": "1 1" });
  add(svg, "path", { d: "M1221 0H1227V2L1224.500 5V17H1223.500V5L1221 2Z", fill: "#d8171f" });
}

function drawVertical(svg) {
  const base = 79;
  let path = "M16.500 0V3000";
  for (let i = -4; i < 150; i++) {
    const y = Math.round(base + i * STEP / 10) + 0.5;
    path += "M" + (i % 10 === 0 ? 4 : 12) + " " + y + "H17";
    if (i % 10 === 0) {
      const ty = y + 16;
      add(svg, "text", { x: 8, y: ty, class: "tick-label", transform: "rotate(-90 8 " + ty + ")" }, 500 + i * 10);
    }
  }
  add(svg, "path", { d: path, stroke: "#111", fill: "none" });
  add(svg, "path", { d: "M0 266L5 268L0 270Z", fill: "#d8171f" });
}

drawHorizontal(document.getElementById("rulerX"));
drawVertical(document.getElementById("rulerY"));
```
